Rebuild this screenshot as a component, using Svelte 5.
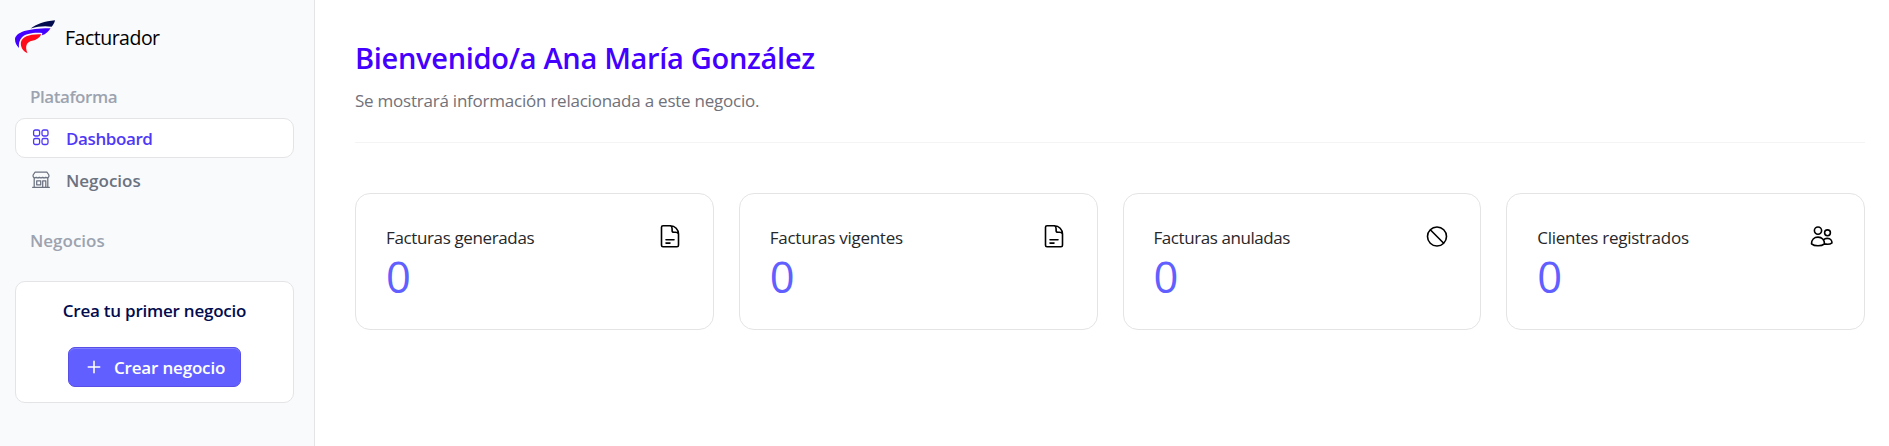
<script>
  const cards = [
    { title: 'Facturas generadas', value: 0, icon: 'file', cls: 'generadas' },
    { title: 'Facturas vigentes', value: 0, icon: 'file', cls: 'vigentes' },
    { title: 'Facturas anuladas', value: 0, icon: 'ban', cls: 'anuladas' },
    { title: 'Clientes registrados', value: 0, icon: 'users', cls: 'clientes' }
  ];
</script>

<div class="shell">
  <aside>
    <a class="brand" href="#inicio">
      <svg width="40" height="34" viewBox="0 0 40 34">
        <path fill="#020b4e" d="M15.700 8.500C21 4 30 1 40 .2c-.4 2.200-1.600 4.400-3.400 6.500C30 5.600 23 6.300 15.700 8.500z" />
        <path fill="#4400ff" d="M4 28C1.500 25.500 0 22.500 0 19.200 .5 12 14 8 35.600 8.200c-2 3.300-4.800 5.900-8.600 7l.3-2.200C19 12.200 10.500 13.500 6.800 17.500 4.200 20.300 3.500 24 4 28z" />
        <path fill="#ff0a1b" d="M12.500 33.300C7.500 31 5.600 27 5.800 22.800 6.800 16.500 15 13.800 26.300 14.300c-1.600 3.600-5 5.800-9.100 6.500-5.500 1.200-7.700 5.200-4.700 12.500z" />
      </svg>
      <span>Facturador</span>
    </a>

    <div class="label platform">Plataforma</div>
    <nav>
      <a class="item active" href="#dashboard">
        <svg width="20" height="20" viewBox="0 0 20 20" fill="none" stroke="currentColor" stroke-width="1.300">
          <rect x="2.600" y="2" width="6" height="6" rx="1.700" />
          <rect x="11" y="2" width="6" height="6" rx="1.700" />
          <rect x="2.600" y="10.500" width="6" height="6" rx="1.700" />
          <rect x="11" y="10.500" width="6" height="6" rx="1.700" />
        </svg>
        <span class="dash">Dashboard</span>
      </a>
      <a class="item" href="#negocios">
        <svg width="20" height="20" viewBox="0 0 20 20" fill="none" stroke="currentColor" stroke-width="1.250" stroke-linecap="round" stroke-linejoin="round">
          <path d="M3.200 7.800V17M16.800 7.800V17M1.600 17.300h16.800M11.700 17v-6.200h3.100V17M5.700 10.800h4v4h-4zM4.100 2.200h11.800l2 2.800v1.300a1.900 1.900 0 0 1-3.100 1 2.200 2.200 0 0 1-3.200 0 2.200 2.200 0 0 1-3.200 0 2.200 2.200 0 0 1-3.200 0 1.900 1.900 0 0 1-3.100-1V5z" />
        </svg>
        <span class="neg">Negocios</span>
      </a>
    </nav>
    <div class="label business">Negocios</div>
    <section class="first">
      <p>Crea tu primer negocio</p>
      <button type="button">
        <svg width="14" height="14" viewBox="0 0 14 14" stroke="currentColor" stroke-width="1.600" stroke-linecap="round"><path d="M7 1.300v11.400M1.300 7h11.400" /></svg>
        <span>Crear negocio</span>
      </button>
    </section>
  </aside>

  <main>
    <h1>Bienvenido/a Ana María González</h1>
    <p class="sub">Se mostrará información relacionada a este negocio.</p>
    <hr />
    <div class="cards">
      {#each cards as card}
        <article>
          <div class="text">
            <h2 class={card.cls}>{card.title}</h2>
            <strong>{card.value}</strong>
          </div>
          <svg width="24" height="24" viewBox="0 0 24 24" fill="none" stroke="#000" stroke-width="1.600" stroke-linecap="round" stroke-linejoin="round">
            {#if card.icon === 'file'}
              <path d="M12.500 1.800H5A1.500 1.500 0 0 0 3.500 3.300v18A1.500 1.500 0 0 0 5 22.800h14a1.500 1.500 0 0 0 1.500-1.500V10c0-4.500-3.500-8.200-8-8.200zM12.500 1.800c1.600.5 1.600 1.800 1.600 3v1.600c0 1.200.6 1.900 1.800 1.900h1.500c1.500 0 2.700.3 3.100 1.700M8 15.800h8M8 19.100h4" />
            {:else if card.icon === 'ban'}
              <path d="M2.500 12.500a9.500 9.500 0 1 0 19 0a9.500 9.500 0 1 0-19 0zM5.300 5.800l13.400 13.400" />
            {:else}
              <circle cx="9" cy="6.600" r="3.600" />
              <circle cx="18.500" cy="8.800" r="2.900" />
              <path d="M9 13.100c-4 0-6.500 2.900-6.500 6.700 1.600 1.400 4 2 6.500 2s4.900-.6 6.500-2c0-3.800-2.500-6.700-6.500-6.700zM14.400 16.100a5 5 0 0 1 4.300-1.700c2.600 0 4.300 2 4.300 4.500-1.600 1.300-4.500 1.700-7.500 1" />
            {/if}
          </svg>
        </article>
      {/each}
    </div>
  </main>
</div>

<style>
  :global(body) { margin: 0; background: #fff; }
  * { box-sizing: border-box; }
  .shell {
    display: flex;
    height: 446px;
    font-family: "Segoe UI", "Open Sans", "Noto Sans", sans-serif;
    white-space: nowrap;
  }
  svg { display: block; flex: none; }
  a { color: inherit; text-decoration: none; }
  aside {
    width: 315px;
    flex: none;
    padding: 0 20px 0 15px;
    background: #f9fafc;
    border-right: 1px solid #e4e4e7;
  }
  .brand {
    display: flex;
    align-items: center;
    gap: 10px;
    height: 73px;
    font-size: 19.500px;
    line-height: 30px;
    color: #000;
    letter-spacing: -0.500px;
  }
  .brand span { padding-top: 3px; }
  .label {
    padding-left: 15px;
    font-size: 17px;
    font-weight: 600;
    line-height: 25px;
    color: #9ca3af;
  }
  .platform { padding-top: 11px; height: 45px; letter-spacing: -0.450px; }
  nav { display: grid; gap: 2px; }
  .item {
    display: flex;
    align-items: center;
    gap: 15px;
    height: 40px;
    padding: 0 15px;
    border: 1px solid transparent;
    border-radius: 10px;
    font-size: 17px;
    font-weight: 600;
    line-height: 24px;
    color: #6b7280;
  }
  .item span { padding-top: 2px; }
  .active { background: #fff; border-color: #e4e4e7; color: #4f39f6; }
  .dash { letter-spacing: -0.400px; }
  .neg { letter-spacing: 0; }
  .business { margin-top: 28px; letter-spacing: 0; }
  .first {
    display: flex;
    flex-direction: column;
    align-items: center;
    height: 122px;
    margin-top: 28px;
    padding-top: 17px;
    background: #fff;
    border: 1px solid #e4e4e7;
    border-radius: 10px;
  }
  .first p {
    margin: 0 0 24px;
    font-size: 17px;
    font-weight: 600;
    line-height: 24px;
    color: #020b4e;
    letter-spacing: -0.230px;
  }
  button {
    display: flex;
    align-items: center;
    gap: 13px;
    width: 173px;
    height: 40px;
    padding: 0 0 0 18px;
    border: 1px solid #574fe6;
    border-radius: 7px;
    background: #615fff;
    box-shadow: inset 0 1px rgba(255, 255, 255, 0.2);
    color: #fff;
    font: 600 17px/24px "Segoe UI", "Open Sans", "Noto Sans", sans-serif;
    letter-spacing: -0.180px;
  }
  button span { padding-top: 2px; }
  main { flex: 1; min-width: 0; padding: 39px 24px 0 40px; }
  h1 {
    margin: 0;
    font-size: 29px;
    font-weight: 600;
    line-height: 38px;
    letter-spacing: -0.310px;
    color: #4400ff;
  }
  .sub {
    margin: 11px 0 0;
    font-size: 17px;
    line-height: 26px;
    letter-spacing: -0.230px;
    color: #71717a;
  }
  hr { margin: 28px 0 50px; border: 0; height: 1px; background: #f4f4f5; }
  .cards { display: grid; grid-template-columns: repeat(4, 1fr); gap: 25px; }
  article {
    display: flex;
    justify-content: space-between;
    height: 137px;
    padding: 30px 31px 0 30px;
    border: 1px solid #e4e4e7;
    border-radius: 15px;
  }
  h2 {
    margin: 0;
    font-size: 17px;
    font-weight: 400;
    line-height: 28px;
    letter-spacing: -0.370px;
    color: #27272a;
  }
  .vigentes { letter-spacing: -0.260px; }
  .anuladas { letter-spacing: -0.430px; }
  .clientes { letter-spacing: -0.260px; }
  strong {
    display: block;
    font-size: 43.500px;
    font-weight: 400;
    line-height: 50px;
    color: #615fff;
  }
</style>
